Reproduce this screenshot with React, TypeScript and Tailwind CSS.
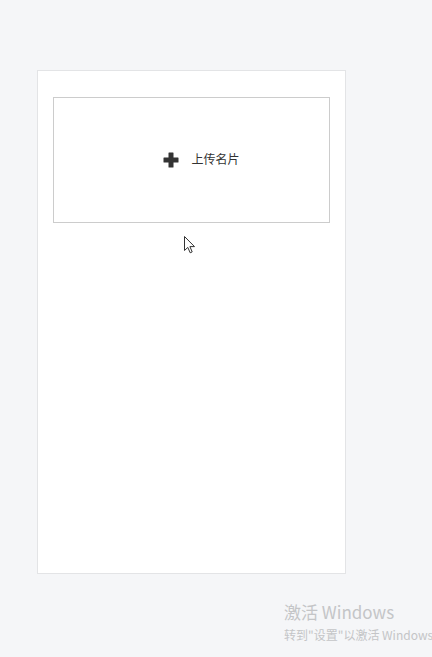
import React from 'react';

function Cursor() {
    return (
        <svg width="12" height="18" viewBox="0 0 12 18" className="absolute left-[184px] top-[236px]">
            <path d="M0.5 0.5 L0.5 14.5 L3.8 11.4 L6.2 16.8 L8.2 15.9 L5.9 10.6 L10.5 10.6 Z" fill="#fff" stroke="#333" strokeWidth="1" strokeLinejoin="round" />
        </svg>
    );
}

export default function App() {
    return (
        <div className="relative w-[432px] h-[657px] bg-[#f5f6f8] overflow-hidden font-['Liberation_Sans','Noto_Sans_CJK_SC',sans-serif]">
            <div className="pt-[70px] pl-[37px]">
                <div className="w-[309px] h-[504px] bg-white border border-[#e3e4e6] px-[15px] pt-[26px]">
                    <button className="w-[277px] h-[126px] border border-[#cccccc] bg-white flex items-center justify-center gap-[12px] pl-[20px]">
                        <svg width="16" height="16" viewBox="0 0 16 16">
                            <rect x="5.5" y="0.5" width="5" height="15" rx="0.5" fill="#333" />
                            <rect x="0.5" y="5.5" width="15" height="5" rx="0.5" fill="#333" />
                        </svg>
                        <span className="text-[12px] text-[#333] leading-none">上传名片</span>
                    </button>
                </div>
            </div>
            <Cursor />
            <div className="absolute left-[284px] top-[601px] w-[148px] overflow-hidden whitespace-nowrap text-[#c4c5c7] font-['Noto_Sans_CJK_SC',sans-serif]">
                <div className="text-[17px] leading-[22px]">激活 Windows</div>
                <div className="text-[12px] leading-[16px] mt-[4px]">转到"设置"以激活 Windows。</div>
            </div>
        </div>
    );
}
